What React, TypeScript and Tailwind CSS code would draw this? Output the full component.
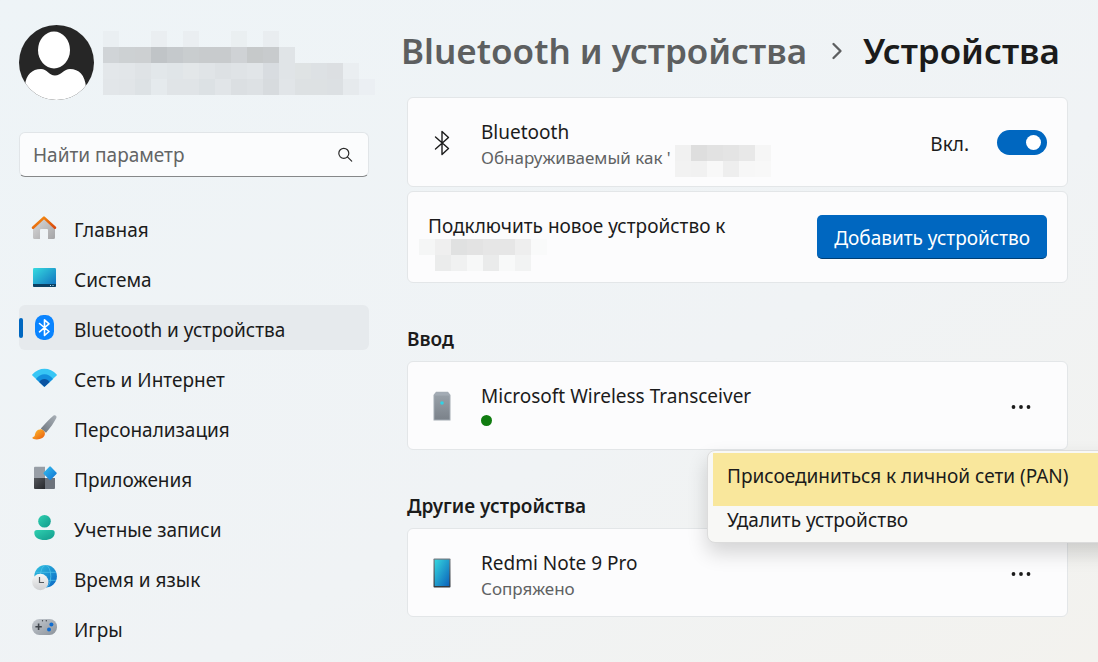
import { useState } from 'react';
import type { ReactNode } from 'react';
import { ChevronRight } from 'lucide-react';

const HomeIcon = () => (
  <svg viewBox="0 0 26 26" className="size-[26px]" aria-hidden="true">
    <defs>
      <linearGradient id="home-wall" x1="0" y1="0" x2="1" y2="1">
        <stop offset="0" stopColor="#dcdcdc" />
        <stop offset="1" stopColor="#a4a4a6" />
      </linearGradient>
      <linearGradient id="home-roof" x1="0" y1="0" x2="1" y2="1">
        <stop offset="0" stopColor="#f7930f" />
        <stop offset="1" stopColor="#d9480f" />
      </linearGradient>
    </defs>
    <path d="M2 11.5 13 2l11 9.5V22.5a1.5 1.5 0 0 1-1.5 1.5H17V15a1 1 0 0 0-1-1h-6a1 1 0 0 0-1 1v9H3.5A1.5 1.5 0 0 1 2 22.500Z" fill="url(#home-wall)" />
    <path d="M2 12.7 13 2.6l11 10.1" fill="none" stroke="url(#home-roof)" strokeWidth="2.6" strokeLinecap="round" strokeLinejoin="round" />
  </svg>
);

const SystemIcon = () => (
  <svg viewBox="0 0 26 26" className="size-[26px]" aria-hidden="true">
    <defs>
      <linearGradient id="system-screen" x1="0" y1="0" x2="1" y2="1">
        <stop offset="0" stopColor="#36dbe0" />
        <stop offset="1" stopColor="#0f6cbd" />
      </linearGradient>
    </defs>
    <rect x="2" y="3" width="23" height="19" rx="1.2" fill="url(#system-screen)" />
    <path d="M2 19h23v1.8a1.2 1.2 0 0 1-1.2 1.2H3.2A1.2 1.2 0 0 1 2 20.8Z" fill="#0b4063" />
    <path d="M19 20h1v1h-1zM21.5 20h1v1h-1z" fill="#b8e4f5" />
  </svg>
);

const BluetoothBadgeIcon = () => (
  <svg viewBox="0 0 26 26" className="size-[26px]" aria-hidden="true">
    <rect x="4" y="0" width="19" height="25" rx="8.5" fill="#0a84ff" />
    <path d="m8.5 8.500 9.500 8-4.500 4V4.800l4.500 4-9.500 8" fill="none" stroke="#fff" strokeWidth="1.6" strokeLinejoin="round" strokeLinecap="round" />
  </svg>
);

const NetworkIcon = () => (
  <svg viewBox="0 0 26 26" className="size-[26px]" aria-hidden="true">
    <path d="M1.300 9.400C8 1.700 19 1.700 25.700 9.400a.9.900 0 0 1-.1 1.200L14.100 21.300a1 1 0 0 1-1.400 0L1.400 10.600a.9.900 0 0 1-.1-1.200Z" fill="#37c6f5" />
    <path d="M5 14C9.200 7.600 17.800 7.600 22 14l-7.900 7.300a1 1 0 0 1-1.400 0Z" fill="#1390de" />
    <path d="M8.200 17.100c2.400-4.200 8-4.200 10.400 0l-4.500 4.200a1 1 0 0 1-1.400 0Z" fill="#0b53a1" />
  </svg>
);

const BrushIcon = () => (
  <svg viewBox="0 0 26 26" className="size-[26px]" aria-hidden="true">
    <defs>
      <linearGradient id="brush-handle" x1="1" y1="0" x2="0" y2="1">
        <stop offset="0" stopColor="#a9b0b7" />
        <stop offset="1" stopColor="#6c747d" />
      </linearGradient>
      <linearGradient id="brush-tip" x1="0" y1="0" x2="1" y2="1">
        <stop offset="0" stopColor="#ffc02e" />
        <stop offset="1" stopColor="#e8590c" />
      </linearGradient>
    </defs>
    <path d="M22.300.8c1.900-1.400 4 .4 2.900 2.500-2.300 4.400-5.400 9.100-10.200 14.500l-5.200-4.300C14.500 8.200 18.700 3.700 22.300.8Z" fill="url(#brush-handle)" />
    <path d="M9 14.400c2.300-.3 5.200 2 4.900 4.600-.4 4.300-6.800 6.700-11.900 4.700-.8-.4-.7-1.400.1-1.700 2-.6 1.500-1.800 2.300-4.100.7-2 2.300-3.300 4.600-3.500Z" fill="url(#brush-tip)" />
  </svg>
);

const AppsIcon = () => (
  <svg viewBox="0 0 26 26" className="size-[26px]" aria-hidden="true">
    <defs>
      <linearGradient id="apps-diamond" x1="0" y1="0" x2="1" y2="1">
        <stop offset="0" stopColor="#35c1f1" />
        <stop offset="1" stopColor="#0f6fd0" />
      </linearGradient>
      <linearGradient id="apps-dark" x1="0" y1="0" x2="1" y2="1">
        <stop offset="0" stopColor="#55585d" />
        <stop offset="1" stopColor="#25272b" />
      </linearGradient>
    </defs>
    <path d="M4 1.700h10V13H3V2.700a1 1 0 0 1 1-1Z" fill="#989ea6" />
    <path d="M3 13h11v11H4a1 1 0 0 1-1-1Z" fill="url(#apps-dark)" />
    <path d="M14 13h10v10a1 1 0 0 1-1 1h-9Z" fill="#6d737c" />
    <path d="m12.800 7.600 5.500-5.900a1 1 0 0 1 1.500 0l5.600 5.900a1 1 0 0 1 0 1.400l-5.600 5.800a1 1 0 0 1-1.500 0L12.800 9a1 1 0 0 1 0-1.400Z" fill="url(#apps-diamond)" />
  </svg>
);

const AccountsIcon = () => (
  <svg viewBox="0 0 26 26" className="size-[26px]" aria-hidden="true">
    <defs>
      <linearGradient id="accounts" x1="0" y1="0" x2="1" y2="1">
        <stop offset="0" stopColor="#2fd0b0" />
        <stop offset="1" stopColor="#129a8c" />
      </linearGradient>
    </defs>
    <circle cx="13.5" cy="6.3" r="6.3" fill="url(#accounts)" />
    <path d="M6 15h15a2.700 2.700 0 0 1 2.700 2.700c0 4.800-4.700 7.300-10.200 7.300S3.300 22.500 3.300 17.700A2.700 2.700 0 0 1 6 15Z" fill="url(#accounts)" />
  </svg>
);

const TimeIcon = () => (
  <svg viewBox="0 0 26 26" className="size-[26px]" aria-hidden="true">
    <defs>
      <linearGradient id="time-globe" x1="0" y1="0" x2="1" y2="1">
        <stop offset="0" stopColor="#31c4e0" />
        <stop offset="1" stopColor="#0a64c4" />
      </linearGradient>
      <linearGradient id="time-clock" x1="0" y1="0" x2="0" y2="1">
        <stop offset="0" stopColor="#f7f7f7" />
        <stop offset="1" stopColor="#cfd0d2" />
      </linearGradient>
    </defs>
    <circle cx="14.6" cy="11.3" r="11.3" fill="url(#time-globe)" />
    <g fill="none" stroke="#4fc0ea" strokeWidth="0.8">
      <ellipse cx="14.6" cy="11.3" rx="5.2" ry="11" />
      <path d="M4.500 7.300h20.400M4 15.300h21" />
    </g>
    <circle cx="9.3" cy="17" r="8.2" fill="url(#time-clock)" />
    <path d="M8.500 12v5.500h4.500" fill="none" stroke="#55585c" strokeWidth="1.2" />
  </svg>
);

const GamesIcon = () => (
  <svg viewBox="0 0 26 26" className="size-[26px]" aria-hidden="true">
    <defs>
      <linearGradient id="games" x1="0" y1="0" x2="1" y2="1">
        <stop offset="0" stopColor="#c6cbd1" />
        <stop offset="1" stopColor="#8b929a" />
      </linearGradient>
    </defs>
    <rect x="1" y="4" width="25" height="16" rx="7.5" fill="url(#games)" />
    <path d="M7.600 8.500v6.400M4.400 11.700h6.400" stroke="#3f444b" strokeWidth="1.6" />
    <circle cx="20.4" cy="9.5" r="2" fill="#0f6cd0" />
    <circle cx="18" cy="14.6" r="2" fill="#0f6cd0" />
    <circle cx="11.5" cy="5.7" r="0.7" fill="#3f444b" />
    <circle cx="15.3" cy="5.7" r="0.7" fill="#3f444b" />
  </svg>
);

const BluetoothIcon = () => (
  <svg viewBox="0 0 24 26" className="mt-[2px] h-[26px] w-6" aria-hidden="true">
    <path d="m5.500 7 13 11.500-6.500 6V1.500l6.500 6-13 11.500" fill="none" stroke="#1b1b1b" strokeWidth="1.4" strokeLinejoin="round" strokeLinecap="round" />
  </svg>
);

const TransceiverIcon = () => (
  <svg viewBox="0 0 24 30" className="h-[30px] w-6" aria-hidden="true">
    <defs>
      <linearGradient id="transceiver" x1="0" y1="0" x2="0" y2="1">
        <stop offset="0" stopColor="#98a0a8" />
        <stop offset="1" stopColor="#7b828a" />
      </linearGradient>
    </defs>
    <path d="M3.500 4 6 .800h12L20.500 4v25.500h-17Z" fill="#a3abb4" />
    <path d="M4.500 4.500h15v24h-15z" fill="url(#transceiver)" />
    <circle cx="12" cy="12" r="1.8" fill="#2fd3e6" />
  </svg>
);

const PhoneIcon = () => (
  <svg viewBox="0 0 24 30" className="h-[30px] w-6" aria-hidden="true">
    <defs>
      <linearGradient id="phone" x1="0" y1="0" x2="1" y2="1">
        <stop offset="0" stopColor="#35d6de" />
        <stop offset="1" stopColor="#0b62bb" />
      </linearGradient>
      <linearGradient id="phone-frame" x1="0" y1="0" x2="0" y2="1">
        <stop offset="0" stopColor="#757b82" />
        <stop offset="1" stopColor="#33373c" />
      </linearGradient>
    </defs>
    <rect x="3.5" y="0.5" width="17" height="29" rx="0.8" fill="url(#phone-frame)" />
    <rect x="4.7" y="1.7" width="14.6" height="26.3" fill="url(#phone)" />
  </svg>
);

// Hidden names are drawn as a grid of grey blocks, null leaves a gap
type Block = string | null;

const Mosaic = ({ rows }: { rows: Block[][] }) => {
  const columns = Math.max(...rows.map((row) => row.length));
  return (
    <svg
      width={columns * 16}
      height={rows.length * 16}
      viewBox={`0 0 ${columns * 16} ${rows.length * 16}`}
      shapeRendering="crispEdges"
      className="shrink-0"
      aria-hidden="true"
    >
      {rows.map((row, y) =>
        row.map((fill, x) =>
          fill ? <rect key={`${x}-${y}`} x={x * 16} y={y * 16} width="16" height="16" fill={fill} /> : null
        )
      )}
    </svg>
  );
};

const userBlocks: Block[][] = [
  ['#eaeff2', null, null, '#eaeef1', null, '#eaeef1', null, null, '#eaeff1', null, '#e9edf0'],
  ['#d0d4d7', '#cdd1d3', '#cdd0d2', '#c0c4c7', '#c5c9cc', '#c9cdcf', '#c8cbcd', '#c8cbcd', '#cfd2d5', '#c6c9ca', '#c8cbcd', '#e0e4e7'],
  ['#e3e7ea', '#e2e6e9', '#dfe3e6', '#e2e7ea', '#e0e5e8', '#e3e7e9', '#e0e4e7', '#dde1e4', '#dfe3e6', '#e1e5e8', '#d8dce0', '#e0e4e7', '#dfe3e4', '#dde1e4', '#dcdfe2', '#eaeef1'],
  ['#e2e6e9', '#e1e5e8', '#dde2e5', '#e5eaed', '#e0e4e7', '#e0e4e7', '#dce1e4', '#e1e5e8', '#dbdfe2', '#dde1e4', '#d7dbde', '#e1e5e8', '#dde1e3', '#dde1e3', '#dce0e3', '#e6eaed', '#ebeff3'],
];

const hostBlocks: Block[][] = [
  ['#f1f1f1', '#dedede', '#e2e2e2', '#e4e4e4', '#e8e8e8', '#f6f6f6'],
  ['#f2f2f2', '#f1f1f1', '#f8f8f8', '#eeeeee', '#f7f7f7', '#f8f8f8'],
];

const targetBlocks: Block[][] = [
  ['#f5f6f6', '#efefef', '#e0e1e1', '#e3e3e3', '#e6e6e6', '#e6e6e6', '#eeeeee', '#f9fafa'],
  [null, '#ebecec', '#f0f1f1', '#f7f8f8', '#eaebeb', '#f8f9f9', '#f2f3f3'],
];

const navItems = [
  { label: 'Главная', icon: HomeIcon },
  { label: 'Система', icon: SystemIcon },
  { label: 'Bluetooth и устройства', icon: BluetoothBadgeIcon },
  { label: 'Сеть и Интернет', icon: NetworkIcon },
  { label: 'Персонализация', icon: BrushIcon },
  { label: 'Приложения', icon: AppsIcon },
  { label: 'Учетные записи', icon: AccountsIcon },
  { label: 'Время и язык', icon: TimeIcon },
  { label: 'Игры', icon: GamesIcon },
];

const Sidebar = () => {
  const [active, setActive] = useState('Bluetooth и устройства');

  return (
    <aside className="w-[350px] shrink-0 pt-[25px]">
      <div className="flex gap-[9px]">
        <svg viewBox="0 0 75 75" className="size-[75px] shrink-0" aria-hidden="true">
          <defs>
            <clipPath id="avatar">
              <circle cx="37.5" cy="37.5" r="37.5" />
            </clipPath>
          </defs>
          <g clipPath="url(#avatar)">
            <rect width="75" height="75" fill="#262626" />
            <ellipse cx="35" cy="25" rx="16" ry="18.5" fill="#fff" />
            <path d="M6 60c1-10 7-16 16-16 6 0 8 6.500 14 6.500S45 44 51 44c9 0 15 6 16 18v14H6Z" fill="#fff" />
          </g>
        </svg>
        <div className="pt-[6px]">
          <Mosaic rows={userBlocks} />
        </div>
      </div>

      <div className="mt-8 flex h-[45px] items-center rounded-md border border-[#e1e5e8] border-b-[#868889] bg-[#fbfcfd] pr-[15px] pl-[13px]">
        <input
          type="text"
          aria-label="Найти параметр"
          placeholder="Найти параметр"
          className="h-full min-w-0 flex-1 bg-transparent text-[19px] text-[#1b1b1b] outline-none placeholder:text-[#636566]"
        />
        <svg viewBox="0 0 16 16" className="size-4" fill="none" stroke="#2b2b2b" strokeWidth="1.2" aria-hidden="true">
          <circle cx="6.8" cy="6.3" r="5" />
          <path d="m10.400 9.900 4.300 4.300" strokeLinecap="round" />
        </svg>
      </div>

      <nav className="mt-7 flex flex-col gap-[5px]">
        {navItems.map(({ label, icon: Icon }) => (
          <a
            key={label}
            href="#"
            onClick={() => setActive(label)}
            className={`relative flex h-[45px] items-center gap-[17px] rounded-md pl-3 ${active === label ? 'bg-[#e6eaed]' : ''}`}
          >
            {active === label && <span className="absolute left-0 h-5 w-1 rounded-full bg-[#0067c0]" />}
            <Icon />
            <span className="pt-1">{label}</span>
          </a>
        ))}
      </nav>
    </aside>
  );
};

const Card = ({ children, className }: { children: ReactNode; className: string }) => (
  <div className={`relative flex items-center rounded-md border border-[#e3e6e8] bg-[#fcfcfd] pr-5 ${className}`}>
    {children}
  </div>
);

const MoreButton = ({ name }: { name: string }) => (
  <button type="button" aria-label={`Другие параметры: ${name}`} className="mr-4 pt-[2px]">
    <svg viewBox="0 0 20 6" className="h-[6px] w-5" fill="#1b1b1b" aria-hidden="true">
      <circle cx="2.5" cy="3" r="1.9" />
      <circle cx="10" cy="3" r="1.9" />
      <circle cx="17.5" cy="3" r="1.9" />
    </svg>
  </button>
);

const ContextMenu = () => (
  <div className="absolute top-[88px] -right-[70px] z-10 w-[430px] rounded-lg border border-[#dcdcdc] bg-[#f8f8f6] pt-[2px] pb-[6px] pl-[5px] shadow-[0_10px_20px_rgba(0,0,0,0.16)]">
    <button type="button" className="block h-[53px] w-full bg-[#f9e79c] pb-2 pl-[14px] text-left">
      Присоединиться к личной сети (PAN)
    </button>
    <button type="button" className="block h-[30px] w-full pb-[2px] pl-[14px] text-left">
      Удалить устройство
    </button>
  </div>
);

export default function App() {
  const [enabled, setEnabled] = useState(true);

  return (
    <div className="flex min-h-screen gap-[38px] overflow-hidden bg-linear-to-br from-[#eef4f7] via-[#f0f3f5] via-60% to-[#f3f2ee] pr-[30px] pl-[19px] font-['Noto_Sans','Open_Sans',sans-serif] text-[19px] leading-[26px] whitespace-nowrap text-[#1b1b1b]">
      <Sidebar />

      <main className="min-w-0 flex-1">
        <h1 className="-ml-[6px] flex h-[97px] items-center pt-[5px] text-[35px] leading-[48px] font-semibold">
          <a href="#" className="text-[#5d5f60]">Bluetooth и устройства</a>
          <ChevronRight className="mr-3 ml-4 size-7 shrink-0 text-[#5d5f60]" aria-hidden="true" />
          Устройства
        </h1>

        <Card className="min-h-[90px] pl-[22px]">
          <BluetoothIcon />
          <div className="ml-[27px] flex-1 pt-[6px]">
            <label htmlFor="bluetooth">Bluetooth</label>
            <p className="flex h-[26px] gap-1 text-[17px] text-[#606263]">
              Обнаруживаемый как '
              <Mosaic rows={hostBlocks} />
            </p>
          </div>
          <span className="mr-7 pt-[3px]">{enabled ? 'Вкл.' : 'Откл.'}</span>
          <input
            id="bluetooth"
            type="checkbox"
            role="switch"
            checked={enabled}
            onChange={(e) => setEnabled(e.target.checked)}
            className="flex h-[25px] w-[50px] appearance-none items-center rounded-full bg-[#8a8a8a] px-[6px] before:size-[15px] before:rounded-full before:bg-white checked:justify-end checked:bg-[#0067c0]"
          />
        </Card>

        <Card className="mt-1 min-h-[92px] justify-between pl-5">
          <div className="pt-[10px]">
            <p>Подключить новое устройство к</p>
            <div className="-ml-[9px] h-8">
              <Mosaic rows={targetBlocks} />
            </div>
          </div>
          <button type="button" className="h-11 rounded-[5px] border-b border-[#003e73] bg-[#0067c0] px-[17px] pt-[3px] text-white">
            Добавить устройство
          </button>
        </Card>

        <h2 className="flex h-[78px] items-end pb-[9px] font-semibold">Ввод</h2>
        <Card className="min-h-[89px] pl-[22px]">
          <TransceiverIcon />
          <div className="ml-[27px] flex-1 pt-[6px]">
            <p>Microsoft Wireless Transceiver</p>
            <div className="flex h-[26px] items-center pb-[2px]">
              <span className="size-[11px] rounded-full bg-[#107c10]" />
            </div>
          </div>
          <MoreButton name="Microsoft Wireless Transceiver" />
          <ContextMenu />
        </Card>

        <h2 className="flex h-[78px] items-end pb-[9px] font-semibold">Другие устройства</h2>
        <Card className="min-h-[89px] pl-[22px]">
          <PhoneIcon />
          <div className="ml-[27px] flex-1 pt-[6px]">
            <p>Redmi Note 9 Pro</p>
            <p className="text-[17px] text-[#606263]">Сопряжено</p>
          </div>
          <MoreButton name="Redmi Note 9 Pro" />
        </Card>
      </main>
    </div>
  );
}
